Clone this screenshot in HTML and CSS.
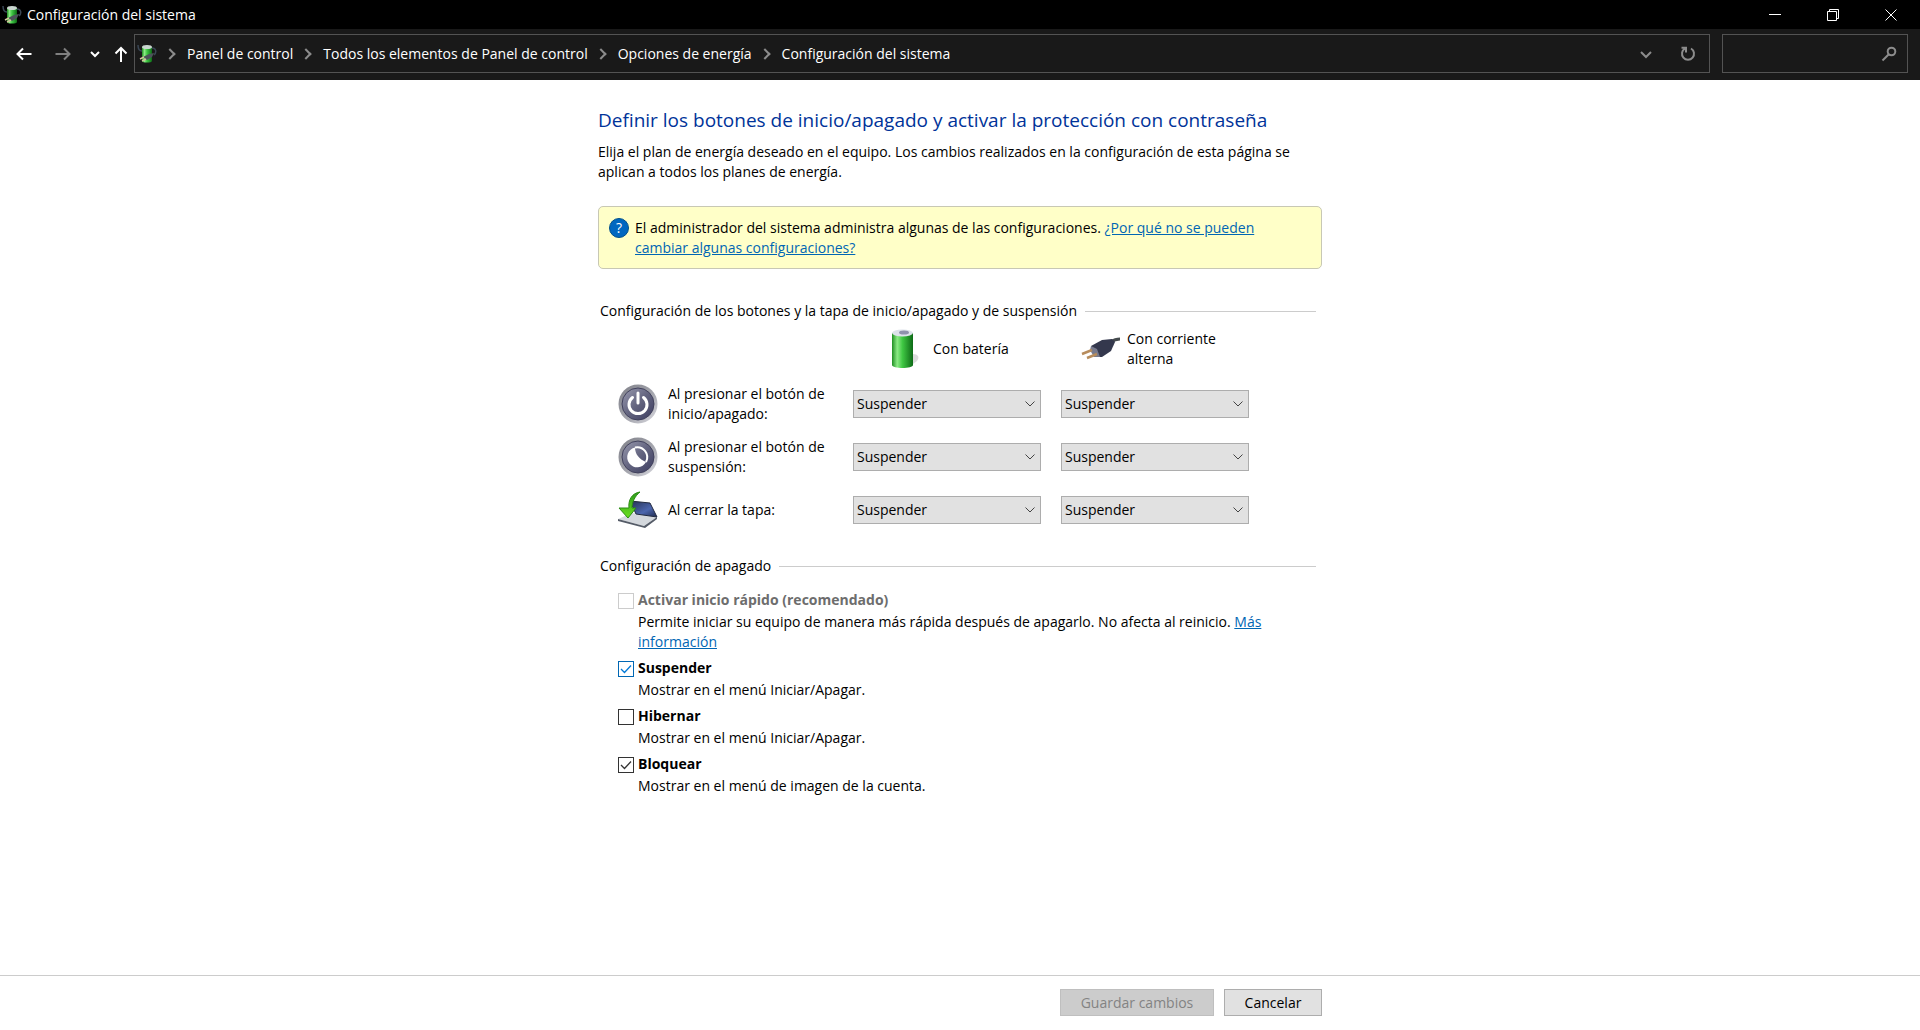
FILE: index.html
```html
<!DOCTYPE html>
<html lang="es">
<head>
<meta charset="utf-8">
<title>Configuración del sistema</title>
<meta name="viewport" content="width=device-width, initial-scale=1">
<link rel="stylesheet" href="styles.css">
</head>
<body>
<svg class="defs" aria-hidden="true">
  <defs>
    <linearGradient id="green"><stop offset="0" stop-color="#1f8f22"/><stop offset=".25" stop-color="#8bea84"/><stop offset=".5" stop-color="#3fc743"/><stop offset="1" stop-color="#0d6a16"/></linearGradient>
    <linearGradient id="rim" x1="0" y1="0" x2="1" y2="1"><stop offset="0" stop-color="#7d7e86"/><stop offset=".6" stop-color="#a9aab2"/><stop offset="1" stop-color="#dcdce2"/></linearGradient>
    <linearGradient id="face" x1="0" y1="0" x2="1" y2="1"><stop offset="0" stop-color="#9a9bb0"/><stop offset=".5" stop-color="#63647f"/><stop offset="1" stop-color="#3c3c60"/></linearGradient>
    <linearGradient id="lid" x1="0" y1="0" x2="1" y2="1"><stop offset="0" stop-color="#26304f"/><stop offset=".6" stop-color="#4c66ae"/><stop offset="1" stop-color="#202a4c"/></linearGradient>
    <linearGradient id="arrow" x1="0" y1="0" x2="0" y2="1"><stop offset="0" stop-color="#2c9a1c"/><stop offset="1" stop-color="#6be01f"/></linearGradient>
    <symbol id="power-options" viewBox="0 0 20 20">
      <path d="M1 1c0 4 1 6 4 6M15 4c4 0 5 4 2 7" fill="none" stroke="#3a4654" stroke-width="1.5"/>
      <path d="M5 3v14c0 2 10 2 10 0V3z" fill="url(#green)"/>
      <ellipse cx="10" cy="3" rx="5" ry="2" fill="#c9d6cf"/>
      <path d="M6 13l6-3 5-1-2 4-5 3z" fill="#4b5458"/>
      <path d="M3 15l4-2M5 17l4-2" stroke="#d2c39b" stroke-width="1.5"/>
    </symbol>
  </defs>
</svg>

<header>
  <div class="titlebar">
    <svg class="app-icon" aria-hidden="true"><use href="#power-options"/></svg>
    <span class="window-title">Configuración del sistema</span>
    <div class="window-buttons">
      <button type="button" aria-label="Minimizar"><svg viewBox="0 0 14 14"><path d="M1 6.500h12"/></svg></button>
      <button type="button" aria-label="Restaurar"><svg viewBox="0 0 14 14"><path d="M1.500 3.500h9v9h-9zM3.500 3.500v-2h9v9h-2"/></svg></button>
      <button type="button" aria-label="Cerrar"><svg viewBox="0 0 14 14"><path d="M1.500 1.500l11 11M12.500 1.500l-11 11"/></svg></button>
    </div>
  </div>
  <div class="toolbar">
    <div class="nav-buttons">
      <button type="button" class="nav-button" aria-label="Atrás"><svg viewBox="0 0 16 16"><path d="M15.500 8H1M7 2.500L1.500 8L7 13.500"/></svg></button>
      <button type="button" class="nav-button dim" aria-label="Adelante"><svg viewBox="0 0 16 16"><path d="M.5 8H15M9 2.500L14.500 8L9 13.500"/></svg></button>
      <button type="button" class="nav-button small" aria-label="Ubicaciones recientes"><svg viewBox="0 0 16 16"><path d="M4 6l4 4l4-4"/></svg></button>
      <button type="button" class="nav-button small" aria-label="Subir"><svg viewBox="0 0 16 16"><path d="M8 16V2M2.500 7.500L8 2l5.500 5.500"/></svg></button>
    </div>
    <nav class="address" aria-label="Ruta">
      <svg class="app-icon" aria-hidden="true"><use href="#power-options"/></svg>
      <ol class="crumbs">
        <li><a href="#">Panel de control</a></li>
        <li><a href="#">Todos los elementos de Panel de control</a></li>
        <li><a href="#">Opciones de energía</a></li>
        <li><a href="#">Configuración del sistema</a></li>
      </ol>
      <button type="button" class="address-button" aria-label="Ubicaciones anteriores"><svg viewBox="0 0 16 16"><path d="M3 6l5 5l5-5"/></svg></button>
      <button type="button" class="address-button refresh" aria-label="Actualizar"><svg viewBox="0 0 16 16"><path d="M11 2.500A6 6 0 1 1 5 2.500M1.500 1.800H6V6.500"/></svg></button>
    </nav>
    <label class="search">
      <input type="search" aria-label="Buscar">
      <svg viewBox="0 0 16 16" aria-hidden="true"><circle cx="10.500" cy="5.500" r="3.800"/><path d="M7.800 8.200L1.500 14.500"/></svg>
    </label>
  </div>
</header>

<main>
  <div class="content">
    <h1>Definir los botones de inicio/apagado y activar la protección con contraseña</h1>
    <p class="intro">Elija el plan de energía deseado en el equipo. Los cambios realizados en la configuración de esta página se aplican a todos los planes de energía.</p>

    <div class="notice">
      <span class="help" aria-hidden="true">?</span>
      <p>El administrador del sistema administra algunas de las configuraciones. <a href="#">¿Por qué no se pueden cambiar algunas configuraciones?</a></p>
    </div>

    <section>
      <h2>Configuración de los botones y la tapa de inicio/apagado y de suspensión</h2>
      <div class="actions">
        <div class="source battery">
          <svg viewBox="0 0 40 40" aria-hidden="true">
            <path d="M26 38l8-6c3-4 1-7-4-7z" fill="#b9b9b9" opacity=".5"/>
            <path d="M9 4v32c0 4 21 4 21 0V4z" fill="url(#green)"/>
            <ellipse cx="19.500" cy="4" rx="10.500" ry="3.500" fill="#dde2ea"/>
            <ellipse cx="21" cy="3.500" rx="5" ry="2" fill="#8f92ad"/>
          </svg>
          <span>Con batería</span>
        </div>
        <div class="source mains">
          <svg viewBox="0 0 40 40" aria-hidden="true">
            <path d="M30 13q4-3 9-3" stroke="#454b4e" stroke-width="3" fill="none"/>
            <path d="M10 17l11-6 10-1 3 3-4 9-9 6-8 0z" fill="#34384d"/>
            <path d="M10 17l6 3 3 8-6 0-4-7z" fill="#777a8d"/>
            <path d="M11 21L1 25M16 25L6 29" stroke="#b78c5c" stroke-width="2.500"/>
          </svg>
          <span>Con corriente alterna</span>
        </div>

        <div class="row-label">
          <svg viewBox="0 0 40 40" aria-hidden="true">
            <circle cx="20" cy="20" r="19.500" fill="url(#rim)"/><circle cx="20" cy="20" r="16" fill="url(#face)" stroke="#41415c"/>
            <path d="M14.500 13.500a9 9 0 1 0 11 0M20 9v10" fill="none" stroke="#fff" stroke-width="3" stroke-linecap="round"/>
          </svg>
          <span id="power">Al presionar el botón de inicio/apagado:</span>
        </div>
        <select aria-labelledby="power"><option>Suspender</option></select>
        <select aria-labelledby="power"><option>Suspender</option></select>

        <div class="row-label">
          <svg viewBox="0 0 40 40" aria-hidden="true">
            <circle cx="20" cy="20" r="19.500" fill="url(#rim)"/><circle cx="20" cy="20" r="16" fill="url(#face)" stroke="#41415c"/>
            <path d="M17 10.500a10 10 0 1 0 11 14.500C21 22 17 17 17 10.500z" fill="#fff"/>
            <path d="M17 10.500a10 10 0 0 1 11 14.500" fill="none" stroke="#fff" stroke-width="2"/>
          </svg>
          <span id="sleep">Al presionar el botón de suspensión:</span>
        </div>
        <select aria-labelledby="sleep"><option>Suspender</option></select>
        <select aria-labelledby="sleep"><option>Suspender</option></select>

        <div class="row-label">
          <svg viewBox="0 0 40 40" aria-hidden="true">
            <path d="M0 29l14-6 25 4-13 9z" fill="#d4d8dd"/>
            <path d="M0 29l26 7 13-9v2l-12 9L0 31z" fill="#555c68"/>
            <path d="M12 11l20 2 7 14-21-3z" fill="url(#lid)" stroke="#222a40"/>
            <path d="M22 2C14 3 10 10 11 18H1l9 10 8-10h-4C14 12 17 6 22 2z" fill="url(#arrow)" stroke="#2c8d15"/>
          </svg>
          <span id="lid-close">Al cerrar la tapa:</span>
        </div>
        <select aria-labelledby="lid-close"><option>Suspender</option></select>
        <select aria-labelledby="lid-close"><option>Suspender</option></select>
      </div>
    </section>

    <section>
      <h2>Configuración de apagado</h2>
      <div class="options">
        <div class="option">
          <input type="checkbox" id="fast" disabled>
          <label for="fast">Activar inicio rápido (recomendado)</label>
          <p>Permite iniciar su equipo de manera más rápida después de apagarlo. No afecta al reinicio. <a href="#">Más información</a></p>
        </div>
        <div class="option">
          <input type="checkbox" id="suspend" class="active" checked>
          <label for="suspend">Suspender</label>
          <p>Mostrar en el menú Iniciar/Apagar.</p>
        </div>
        <div class="option">
          <input type="checkbox" id="hibernate">
          <label for="hibernate">Hibernar</label>
          <p>Mostrar en el menú Iniciar/Apagar.</p>
        </div>
        <div class="option">
          <input type="checkbox" id="lock" checked>
          <label for="lock">Bloquear</label>
          <p>Mostrar en el menú de imagen de la cuenta.</p>
        </div>
      </div>
    </section>
  </div>
</main>

<footer>
  <div class="footer-buttons">
    <button type="button" class="save" disabled>Guardar cambios</button>
    <button type="button" class="cancel">Cancelar</button>
  </div>
</footer>
</body>
</html>
```
FILE: styles.css
```css
* { box-sizing: border-box; }

body {
  margin: 0;
  min-height: 100vh;
  display: flex;
  flex-direction: column;
  background: #fff;
  color: #000;
  font: 14px/20px "Open Sans", "Noto Sans", sans-serif;
}

h1, h2, p, ol { margin: 0; padding: 0; font-weight: 400; }
button, select, input { font: inherit; color: inherit; margin: 0; }
svg { display: block; flex: none; }
a { color: #0066b4; }
.defs { position: absolute; width: 0; height: 0; }

/* Window frame */
.titlebar {
  display: flex;
  align-items: center;
  height: 29px;
  padding-left: 2px;
  background: #000;
  color: #fff;
}
.app-icon { width: 20px; height: 20px; }
.window-title { flex: 1; padding-left: 5px; }
.window-buttons { display: flex; }
.window-buttons button {
  display: grid;
  place-items: center;
  width: 58px;
  height: 29px;
  padding: 0;
  border: 0;
  background: none;
}
.window-buttons svg { width: 14px; height: 14px; fill: none; stroke: #fff; }

.toolbar {
  display: flex;
  height: 51px;
  padding: 5px 12px 7px 4px;
  background: #191919;
  color: #fff;
}
.nav-buttons { display: flex; align-items: center; width: 130px; }
.nav-button { width: 39px; padding: 0; border: 0; background: none; display: grid; place-items: center; }
.nav-button.small { width: 26px; }
.nav-button svg { width: 16px; height: 16px; fill: none; stroke: #fff; stroke-width: 2; }
.nav-button.dim svg { stroke: #808080; }
.address {
  flex: 1;
  display: flex;
  align-items: center;
  padding-left: 2px;
  border: 1px solid #535353;
}
.crumbs { flex: 1; display: flex; list-style: none; }
.crumbs li { display: flex; align-items: center; }
.crumbs li::before {
  content: "";
  width: 6px;
  height: 6px;
  margin: 0 13px 0 9px;
  border: solid #8c8c8c;
  border-width: 2px 2px 0 0;
  transform: rotate(45deg);
}
.crumbs a { color: #fff; text-decoration: none; }
.address-button {
  display: grid;
  place-items: center;
  width: 42px;
  height: 37px;
  padding: 0;
  border: 0;
  background: none;
}
.address-button svg, .search svg { width: 16px; height: 16px; fill: none; stroke: #8c8c8c; stroke-width: 2; }
.search {
  display: flex;
  align-items: center;
  width: 186px;
  margin-left: 12px;
  padding-right: 10px;
  border: 1px solid #535353;
}
.search input { flex: 1; min-width: 0; border: 0; background: none; outline: 0; }

/* Page */
main { flex: 1; padding: 28px 16px; }
.content { max-width: 724px; margin: 0 auto; }
h1 { color: #003399; font-size: 19px; line-height: 24px; }
.intro { padding-top: 10px; }
.notice {
  display: flex;
  gap: 6px;
  margin-top: 24px;
  padding: 11px 50px 10px 10px;
  border: 1px solid #c8c8b4;
  border-radius: 5px;
  background: #ffffc8;
}
.help {
  flex: none;
  width: 20px;
  height: 20px;
  border: 1px solid #00508c;
  border-radius: 50%;
  background: #0067c0;
  color: #fff;
  line-height: 18px;
  text-align: center;
}
section { padding: 0 6px 0 2px; }
h2 { display: flex; align-items: center; gap: 8px; font-size: 14px; line-height: 20px; }
h2::after { content: ""; flex: 1; height: 1px; background: #ccc; }
.notice + section { margin-top: 32px; }
section + section { margin-top: 20px; }

.actions {
  display: grid;
  grid-template-columns: 215px 188px 188px;
  grid-template-rows: 56px;
  grid-auto-rows: 53px;
  column-gap: 20px;
  align-items: center;
  padding-left: 18px;
}
.source, .row-label { display: flex; align-items: center; gap: 10px; }
.battery { grid-column: 2; padding-left: 30px; }
.mains { padding: 0 20px; gap: 6px; }
.actions svg { width: 40px; height: 40px; }
select {
  appearance: none;
  width: 188px;
  height: 28px;
  padding: 0 24px 0 3px;
  border: 1px solid #adadad;
  border-radius: 0;
  background: #e1e1e1 url("data:image/svg+xml,%3Csvg xmlns='http://www.w3.org/2000/svg' width='10' height='6'%3E%3Cpath d='M.5.5L5 5L9.500.5' fill='none' stroke='%23444'/%3E%3C/svg%3E") no-repeat right 5px center;
}

.options { padding: 14px 0 0 18px; }
.option { display: grid; grid-template-columns: 16px 1fr; column-gap: 4px; padding-bottom: 6px; }
.option label { font-weight: 700; line-height: 20px; }
.option p { grid-column: 2; padding-top: 2px; }
input[type="checkbox"] {
  appearance: none;
  width: 16px;
  height: 16px;
  margin-top: 3px;
  border: 1px solid #333;
  background: #fff no-repeat center;
}
input[type="checkbox"]:checked { background-image: url("data:image/svg+xml,%3Csvg xmlns='http://www.w3.org/2000/svg' width='12' height='12'%3E%3Cpath d='M1 6l3.500 3.500L11 2.500' fill='none' stroke='%23333' stroke-width='1.300'/%3E%3C/svg%3E"); }
input[type="checkbox"].active { border-color: #0067b4; background-image: url("data:image/svg+xml,%3Csvg xmlns='http://www.w3.org/2000/svg' width='12' height='12'%3E%3Cpath d='M1 6l3.500 3.500L11 2.500' fill='none' stroke='%230078d7' stroke-width='1.300'/%3E%3C/svg%3E"); }
input:disabled { border-color: #ccc; }
input:disabled + label { color: #6d6d6d; }

footer { padding: 13px 16px 14px; border-top: 1px solid #ccc; }
.footer-buttons { display: flex; justify-content: flex-end; gap: 10px; max-width: 724px; margin: 0 auto; }
.footer-buttons button { height: 27px; padding: 0; border: 1px solid #adadad; background: #e1e1e1; }
.footer-buttons .save { width: 154px; border-color: #bfbfbf; background: #ccc; color: #838383; }
.footer-buttons .cancel { width: 98px; }
```
